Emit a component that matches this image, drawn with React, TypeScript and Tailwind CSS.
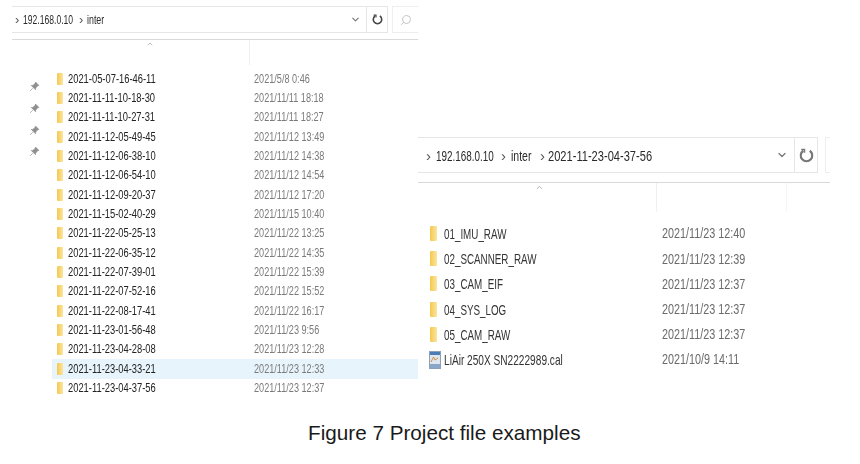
import React from 'react';
import { ChevronDown, ChevronUp, Search } from 'lucide-react';

const leftRows = [
  ['2021-05-07-16-46-11', '2021/5/8 0:46'],
  ['2021-11-11-10-18-30', '2021/11/11 18:18'],
  ['2021-11-11-10-27-31', '2021/11/11 18:27'],
  ['2021-11-12-05-49-45', '2021/11/12 13:49'],
  ['2021-11-12-06-38-10', '2021/11/12 14:38'],
  ['2021-11-12-06-54-10', '2021/11/12 14:54'],
  ['2021-11-12-09-20-37', '2021/11/12 17:20'],
  ['2021-11-15-02-40-29', '2021/11/15 10:40'],
  ['2021-11-22-05-25-13', '2021/11/22 13:25'],
  ['2021-11-22-06-35-12', '2021/11/22 14:35'],
  ['2021-11-22-07-39-01', '2021/11/22 15:39'],
  ['2021-11-22-07-52-16', '2021/11/22 15:52'],
  ['2021-11-22-08-17-41', '2021/11/22 16:17'],
  ['2021-11-23-01-56-48', '2021/11/23 9:56'],
  ['2021-11-23-04-28-08', '2021/11/23 12:28'],
  ['2021-11-23-04-33-21', '2021/11/23 12:33'],
  ['2021-11-23-04-37-56', '2021/11/23 12:37'],
];

const rightRows = [
  ['01_IMU_RAW', '2021/11/23 12:40'],
  ['02_SCANNER_RAW', '2021/11/23 12:39'],
  ['03_CAM_EIF', '2021/11/23 12:37'],
  ['04_SYS_LOG', '2021/11/23 12:37'],
  ['05_CAM_RAW', '2021/11/23 12:37'],
];

const Folder = ({ className }: { className: string }) => (
  <div className={`shrink-0 rounded-[1px] bg-gradient-to-r from-[#f4c84f] to-[#fbe59c] ${className}`} />
);

const Pin = () => (
  <svg width="11" height="11" viewBox="0 0 10 10" className="text-[#8f8f8f]">
    <path d="M6 1 L9 4 L7.6 4.6 L6 6.6 L6 8 L2 4 L3.4 4 L5.4 2.4 Z M3.4 6.6 L1 9" fill="currentColor" stroke="currentColor" strokeWidth="0.6" />
  </svg>
);

// the refresh glyph of the address bar: a U with a small tick at the upper left
const Refresh = ({ size, color }: { size: number; color: string }) => (
  <svg width={size} height={size} viewBox="0 0 12 12" fill="none" stroke={color} strokeWidth="1.7">
    <path d="M3.4 2.2 A4.6 4.6 0 1 0 8.6 2.2" />
    <path d="M1.8 1.2 H4.4 V3.8" strokeWidth="1.2" />
  </svg>
);

const CalFile = () => (
  <svg width="12" height="18" viewBox="0 0 12 18" className="shrink-0">
    <rect x="0.5" y="0.5" width="11" height="17" fill="#dfe6ee" stroke="#8ea0b8" />
    <rect x="1" y="1" width="10" height="3" fill="#4a7cb8" />
    <path d="M2 11 L4.5 6 L6 9 L9 7" fill="none" stroke="#c9924a" strokeWidth="1" />
    <rect x="1" y="13" width="10" height="4" fill="#8aa6c8" />
  </svg>
);

export default function App() {
  return (
    <div className="w-[860px] h-[464px] overflow-hidden bg-white font-['Liberation_Sans',sans-serif]">
      <div className="flex h-[417px] blur-[0.4px]">
        {/* left window */}
        <div className="ml-[12px] mt-[6px] w-[406px] shrink-0">
          <div className="flex h-[27px] gap-[4px]">
            <div className="flex w-[376px] items-center border-y border-r border-[#e6e6e6]">
              <div className="flex w-[338px] items-center whitespace-nowrap pl-[3px] text-[13px] leading-none text-[#2a2a2a]">
                <span className="w-[8px] shrink-0 text-[#555]">›</span>
                <span className="w-[56px] shrink-0 origin-left scale-x-[0.66]">192.168.0.10</span>
                <span className="w-[8px] shrink-0 text-[#555]">›</span>
                <span className="origin-left scale-x-[0.68]">inter</span>
              </div>
              <ChevronDown size={11} strokeWidth={2.5} className="text-[#777]" />
              <div className="ml-[5px] flex h-full flex-1 items-center justify-center border-l border-[#e6e6e6]">
                <Refresh size={11} color="#444" />
              </div>
            </div>
            <div className="flex flex-1 items-center justify-center border-y border-l border-[#eeeeee]">
              <Search size={12} className="-scale-x-100 text-[#c4c4c4]" />
            </div>
          </div>
          <div className="mt-[6px] flex h-[26px] justify-start border-t border-[#d9d9d9]">
            <div className="flex w-[238px] justify-center border-r border-[#f0f0f0] pl-[39px]">
              <ChevronUp size={8} className="text-[#999]" />
            </div>
          </div>
          <div className="mt-[4px] flex">
            <div className="flex w-[40px] shrink-0 flex-col gap-[10.8px] pl-[17px] pt-[12px]">
              <Pin />
              <Pin />
              <Pin />
              <Pin />
            </div>
            <div className="flex-1">
              {leftRows.map(([name, date], i) => (
                <div
                  key={name}
                  className={`flex h-[19.35px] items-center pl-[5px] leading-none ${i === 15 ? 'bg-[#e7f4fb]' : ''}`}
                >
                  <Folder className="h-[12px] w-[6px]" />
                  <span className="ml-[5px] w-[186px] shrink-0 origin-left scale-x-[0.78] whitespace-nowrap text-[12px] text-[#222]">{name}</span>
                  <span className="origin-left scale-x-[0.76] whitespace-nowrap text-[12px] text-[#7a7a7a]">{date}</span>
                </div>
              ))}
            </div>
          </div>
        </div>

        {/* right window */}
        <div className="mt-[137px] w-[412px] shrink-0">
          <div className="flex h-[36px] gap-[7px]">
            <div className="flex w-[400px] items-center border-y border-r border-[#e6e6e6]">
              <div className="flex w-[358px] items-center whitespace-nowrap pl-[8px] text-[15px] leading-none text-[#2a2a2a]">
                <span className="w-[10px] shrink-0 text-[#555]">›</span>
                <span className="w-[65px] shrink-0 origin-left scale-x-[0.66]">192.168.0.10</span>
                <span className="w-[10px] shrink-0 text-[#555]">›</span>
                <span className="w-[29px] shrink-0 origin-left scale-x-[0.7]">inter</span>
                <span className="w-[8px] shrink-0 text-[#555]">›</span>
                <span className="origin-left scale-x-[0.74]">2021-11-23-04-37-56</span>
              </div>
              <ChevronDown size={12} strokeWidth={2.5} className="text-[#777]" />
              <div className="ml-[6px] flex h-full flex-1 items-center justify-center border-l border-[#e6e6e6]">
                <Refresh size={15} color="#777" />
              </div>
            </div>
            <div className="flex-1 border-y border-l border-[#eeeeee]" />
          </div>
          <div className="mt-[9px] flex h-[30px] border-t border-[#d9d9d9]">
            <div className="flex w-[239px] justify-center border-r border-[#f0f0f0] pl-[5px]">
              <ChevronUp size={9} className="text-[#999]" />
            </div>
            <div className="w-[130px] border-r border-[#f5f5f5]" />
          </div>
          <div className="mt-[9px]">
            {rightRows.map(([name, date]) => (
              <div key={name} className="flex h-[25.2px] items-center pl-[12px] leading-none">
                <Folder className="h-[15px] w-[7px]" />
                <span className="ml-[7px] w-[218px] shrink-0 origin-left scale-x-[0.655] whitespace-nowrap text-[15px] text-[#333]">{name}</span>
                <span className="origin-left scale-x-[0.745] whitespace-nowrap text-[14.5px] text-[#6a6a6a]">{date}</span>
              </div>
            ))}
            <div className="flex h-[25.2px] items-center pl-[11px] leading-none">
              <CalFile />
              <span className="ml-[3px] w-[218px] shrink-0 origin-left scale-x-[0.675] whitespace-nowrap text-[15px] text-[#333]">LiAir 250X SN2222989.cal</span>
              <span className="origin-left scale-x-[0.745] whitespace-nowrap text-[14.5px] text-[#6a6a6a]">2021/10/9 14:11</span>
            </div>
          </div>
        </div>
      </div>
      <p className="ml-[308px] whitespace-nowrap text-[20.7px] leading-[32px] text-[#1a1a1a]">Figure 7 Project file examples</p>
    </div>
  );
}
